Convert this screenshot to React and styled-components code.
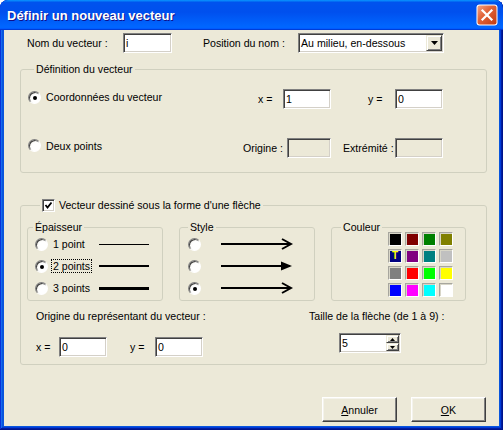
import React from "react"
import styled, { createGlobalStyle } from "styled-components"

const GlobalStyle = createGlobalStyle`
  html, body {
    margin: 0;
    padding: 0;
    background: #ffffff;
  }
  body {
    font-family: "Liberation Sans", Arial, sans-serif;
    font-size: 10.6px;
    color: #000;
  }
  * {
    box-sizing: border-box;
  }
`

const Window = styled.div`
  width: 503px;
  height: 430px;
  display: flex;
  flex-direction: column;
  background: #0855dd;
  border-radius: 8px 8px 0 0;
  overflow: hidden;
  box-shadow: inset -1px -1px #00138c, inset 1px 1px #0831d9,
    inset -2px -2px #001ea0, inset 2px 2px #166aee, inset -3px -3px #003bda,
    inset 3px 3px #0855dd;
`

const TitleBar = styled.div`
  height: 30px;
  flex: none;
  display: flex;
  align-items: center;
  padding: 0 5px 0 7px;
  background: linear-gradient(180deg, #0997ff, #0053ee 8%, #0050ee 40%, #06f 88%, #06f 93%, #005bff 95%, #003dd7 96%, #003dd7);
  border-radius: 8px 8px 0 0;
`

const TitleText = styled.span`
  flex: 1;
  font-family: "Liberation Sans", Arial, sans-serif;
  font-weight: bold;
  font-size: 13px;
  color: #fff;
  text-shadow: 1px 1px #0f1089;
  margin-top: 1px;
`

const CloseIcon = styled.svg`
  flex: none;
  display: block;
`

const Body = styled.div`
  flex: 1;
  margin: 0 4px 4px;
  background: #ece9d8;
  display: flex;
  flex-direction: column;
  padding: 3px 12px 0 16px;
`

const Row = styled.div`
  display: flex;
  align-items: center;
  flex: none;
  height: ${p => p.$h || 20}px;
  margin-top: ${p => p.$mt || 0}px;
  padding-left: ${p => p.$pl || 0}px;
`

const Label = styled.span`
  flex: none;
  width: ${p => (p.$w ? p.$w + "px" : "auto")};
  margin-left: ${p => p.$ml || 0}px;
  white-space: nowrap;
  line-height: 14px;
`

const Edit = styled.div`
  flex: none;
  width: ${p => p.$w}px;
  height: 20px;
  margin-left: ${p => p.$ml || 0}px;
  display: flex;
  align-items: center;
  padding-left: 2px;
  background: ${p => (p.$disabled ? "#ece9d8" : "#fff")};
  border: 1px solid;
  border-color: #808080 #fff #fff #808080;
  box-shadow: inset 1px 1px #404040, inset -1px -1px #d4d0c8;
  white-space: nowrap;
`

const ArrowButton = styled.div`
  flex: none;
  width: ${p => p.$w}px;
  height: ${p => p.$h}px;
  margin-left: auto;
  background: #ece9d8;
  border: 1px solid;
  border-color: #ece9d8 #404040 #404040 #ece9d8;
  box-shadow: inset 1px 1px #fff, inset -1px -1px #808080;
  display: flex;
  align-items: center;
  justify-content: center;
`

const SpinStack = styled.div`
  margin-left: auto;
  display: flex;
  flex-direction: column;
  align-self: stretch;
  padding: 1px 1px 1px 0;
`

const Group = styled.fieldset`
  margin: ${p => p.$mt || 0}px 0 0;
  padding: 0 0 ${p => p.$pb || 0}px ${p => p.$pl || 0}px;
  border: 1px solid #d0d0bf;
  border-radius: 3px;
  min-width: 0;
  width: ${p => (p.$w ? p.$w + "px" : "auto")};
  flex: none;
`

const Legend = styled.legend`
  margin-left: ${p => p.$ml || 0}px;
  padding: 0 2px;
  line-height: 14px;
  height: 14px;
  display: flex;
  align-items: center;
  gap: 4px;
`

const RadioOption = styled.div`
  display: flex;
  align-items: center;
  gap: 5px;
  flex: none;
  width: ${p => (p.$w ? p.$w + "px" : "auto")};
  margin-bottom: ${p => p.$lift || 0}px;
`

const RadioCircle = styled.span`
  position: relative;
  flex: none;
  width: 13px;
  height: 13px;
  border-radius: 50%;
  border: 1px solid;
  border-color: #808080 #fff #fff #808080;
  background: radial-gradient(circle at 65% 65%, #fff 45%, #e3e1d6 100%);
  box-shadow: inset 1px 1px #404040;

  &::after {
    content: "";
    display: ${p => (p.$checked ? "block" : "none")};
    position: absolute;
    left: 4px;
    top: 4px;
    width: 4px;
    height: 4px;
    border-radius: 50%;
    background: #000;
  }
`

const Focus = styled.span`
  outline: 1px dotted #000;
  outline-offset: 0;
  padding: 0 1px;
  margin-left: -1px;
`

const CheckBox = styled.span`
  flex: none;
  width: 13px;
  height: 13px;
  background: #fff;
  border: 1px solid;
  border-color: #808080 #fff #fff #808080;
  box-shadow: inset 1px 1px #404040, inset -1px -1px #d4d0c8;
  display: flex;
  align-items: center;
  justify-content: center;
`

const SubRow = styled.div`
  display: flex;
  gap: 16px;
  margin-top: 8px;
`

const SubBody = styled.div`
  display: grid;
  grid-template-rows: repeat(3, 22px);
  margin-top: -1px;
  padding-left: ${p => p.$pl}px;
  padding-bottom: 1px;
`

const Option = styled.div`
  display: flex;
  align-items: center;
`

const Thickness = styled.div`
  width: 50px;
  height: ${p => p.$t}px;
  background: #000;
`

const ArrowIcon = styled.svg`
  margin-left: 20px;
  display: block;
`

const Palette = styled.div`
  display: grid;
  grid-template-columns: repeat(4, 14px);
  grid-auto-rows: 14px;
  gap: 3px;
  margin-top: -2px;
  margin-bottom: 3px;
  padding-left: 56px;
`

const Swatch = styled.div`
  border: 1px solid;
  border-color: #a7a69e #fff #fff #a7a69e;
  box-shadow: inset 1px 1px #d8d6c8;
  background: ${p => p.$c};
  color: #ffff00;
  font-size: 10px;
  font-weight: bold;
  line-height: 12px;
  text-align: center;
`

const Bottom = styled.div`
  display: flex;
  margin-top: 8px;
  padding-left: 9px;
`

const Column = styled.div`
  display: flex;
  flex-direction: column;
  width: ${p => (p.$w ? p.$w + "px" : "auto")};
`

const ButtonRow = styled.div`
  display: flex;
  justify-content: flex-end;
  gap: 14px;
  margin-top: 32px;
  padding-right: 1px;
`

const Button = styled.button`
  width: 75px;
  height: 25px;
  padding: 0;
  font-family: inherit;
  font-size: 10.6px;
  color: #000;
  background: #ece9d8;
  border: 1px solid;
  border-color: #fff #404040 #404040 #fff;
  box-shadow: inset -1px -1px #808080, inset 1px 1px #f4f3ec;
`

const CloseGlyph = () => (
  <CloseIcon width="22" height="22" viewBox="0 0 22 22">
    <defs>
      <linearGradient id="closeFill" x1="0" y1="0" x2="1" y2="1">
        <stop offset="0" stopColor="#f4a484" />
        <stop offset="0.4" stopColor="#e2643a" />
        <stop offset="1" stopColor="#c13a10" />
      </linearGradient>
    </defs>
    <rect x="0.5" y="0.5" width="21" height="21" rx="3" fill="#ffffff" />
    <rect x="1.5" y="1.5" width="19" height="19" rx="2" fill="url(#closeFill)" />
    <path
      d="M6.5 6.5 L15.5 15.5 M15.5 6.5 L6.5 15.5"
      stroke="#ffffff"
      strokeWidth="2.2"
      strokeLinecap="square"
    />
  </CloseIcon>
)

const DownTriangle = () => (
  <svg width="7" height="4" viewBox="0 0 7 4">
    <polygon points="0,0 7,0 3.5,4" fill="#000" />
  </svg>
)

const Arrow = ({ kind }) => (
  <ArrowIcon width="72" height="12" viewBox="0 0 72 12">
    <line x1="0" y1="6" x2="69" y2="6" stroke="#000" strokeWidth="2" />
    {kind === "filled" ? (
      <polygon points="60,1.5 71,6 60,10.5" fill="#000" />
    ) : (
      <polyline
        points="61,1 70,6 61,11"
        fill="none"
        stroke="#000"
        strokeWidth="2"
      />
    )}
  </ArrowIcon>
)

const colors = [
  "#000000", "#800000", "#008000", "#808000",
  "#000080", "#800080", "#008080", "#c0c0c0",
  "#808080", "#ff0000", "#00ff00", "#ffff00",
  "#0000ff", "#ff00ff", "#00ffff", "#ffffff",
]

const App = () => {
  return (
    <>
      <GlobalStyle />
      <Window>
        <TitleBar>
          <TitleText>Définir un nouveau vecteur</TitleText>
          <CloseGlyph />
        </TitleBar>
        <Body>
          <Row $pl={7}>
            <Label $w={96}>Nom du vecteur :</Label>
            <Edit $w={49}>i</Edit>
            <Label $w={95} $ml={31}>Position du nom :</Label>
            <Edit $w={146}>
              Au milieu, en-dessous
              <ArrowButton $w={16} $h={16} style={{ marginRight: 1 }}>
                <DownTriangle />
              </ArrowButton>
            </Edit>
          </Row>

          <Group $mt={9} $pl={6} $pb={14}>
            <Legend $ml={7}>Définition du vecteur</Legend>
            <Row $mt={13} $pl={1}>
              <RadioOption $w={230} $lift={4}>
                <RadioCircle $checked />
                Coordonnées du vecteur
              </RadioOption>
              <Label $w={25}>x =</Label>
              <Edit $w={48}>1</Edit>
              <Label $w={27} $ml={37}>y =</Label>
              <Edit $w={48}>0</Edit>
            </Row>
            <Row $mt={29} $pl={1}>
              <RadioOption $w={215} $lift={5}>
                <RadioCircle />
                Deux points
              </RadioOption>
              <Label $w={44}>Origine :</Label>
              <Edit $w={44} $disabled />
              <Label $w={52} $ml={12}>Extrémité :</Label>
              <Edit $w={48} $disabled />
            </Row>
          </Group>

          <Group $mt={25} $pl={6} $pb={7}>
            <Legend $ml={13}>
              <CheckBox>
                <svg width="9" height="9" viewBox="0 0 9 9">
                  <polyline
                    points="1.5,4 3.5,6.5 7.5,1.5"
                    fill="none"
                    stroke="#000"
                    strokeWidth="1.8"
                  />
                </svg>
              </CheckBox>
              Vecteur dessiné sous la forme d'une flèche
            </Legend>

            <SubRow>
              <Group $w={136}>
                <Legend $ml={5}>Épaisseur</Legend>
                <SubBody $pl={7}>
                  {[1, 2, 3].map(t => (
                    <Option key={t}>
                      <RadioOption $w={64}>
                        <RadioCircle $checked={t === 2} />
                        {t === 2 ? (
                          <Focus>2 points</Focus>
                        ) : (
                          <span>{t === 1 ? "1 point" : "3 points"}</span>
                        )}
                      </RadioOption>
                      <Thickness $t={t} />
                    </Option>
                  ))}
                </SubBody>
              </Group>

              <Group $w={136}>
                <Legend $ml={8}>Style</Legend>
                <SubBody $pl={8}>
                  {["open", "filled", "open"].map((k, i) => (
                    <Option key={i}>
                      <RadioCircle $checked={i === 2} />
                      <Arrow kind={k} />
                    </Option>
                  ))}
                </SubBody>
              </Group>

              <Group $w={135}>
                <Legend $ml={9}>Couleur</Legend>
                <Palette>
                  {colors.map((c, i) => (
                    <Swatch key={i} $c={c}>
                      {i === 4 ? "T" : null}
                    </Swatch>
                  ))}
                </Palette>
              </Group>
            </SubRow>

            <Bottom>
              <Column $w={273}>
                <Label>Origine du représentant du vecteur :</Label>
                <Row $mt={14}>
                  <Label $w={23}>x =</Label>
                  <Edit $w={48}>0</Edit>
                  <Label $w={25} $ml={23}>y =</Label>
                  <Edit $w={48}>0</Edit>
                </Row>
              </Column>
              <Column>
                <Label>Taille de la flèche (de 1 à 9) :</Label>
                <Row $mt={10} $pl={30}>
                  <Edit $w={62}>
                    5
                    <SpinStack>
                      <ArrowButton $w={13} $h={8}>
                        <svg width="5" height="3" viewBox="0 0 5 3">
                          <polygon points="0,3 5,3 2.5,0" fill="#000" />
                        </svg>
                      </ArrowButton>
                      <ArrowButton $w={13} $h={8}>
                        <svg width="5" height="3" viewBox="0 0 5 3">
                          <polygon points="0,0 5,0 2.5,3" fill="#000" />
                        </svg>
                      </ArrowButton>
                    </SpinStack>
                  </Edit>
                </Row>
              </Column>
            </Bottom>
          </Group>

          <ButtonRow>
            <Button>
              <u>A</u>nnuler
            </Button>
            <Button>
              <u>O</u>K
            </Button>
          </ButtonRow>
        </Body>
      </Window>
    </>
  )
}

export default App
